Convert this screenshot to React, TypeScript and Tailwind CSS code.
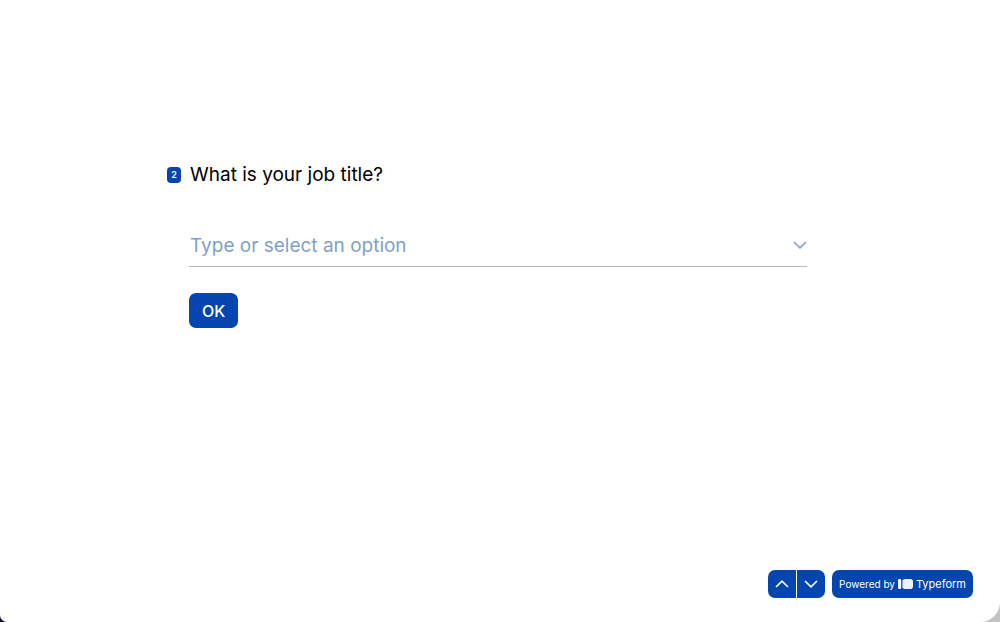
import React, { useState } from "react";

function Chevron({ up = false, className }: { up?: boolean; className: string }) {
  return (
    <svg viewBox="0 0 14 8" fill="none" stroke="currentColor" aria-hidden="true" className={className}>
      <path d={up ? "M1 7 7 1.2 13 7" : "M1 1 7 6.8 13 1"} />
    </svg>
  );
}

function TypeformMark() {
  return (
    <svg viewBox="0 0 15 10" aria-hidden="true" className="h-2.5 w-[15px] fill-white">
      <rect x="0" y="0" width="3.2" height="10" rx="1.3" />
      <rect x="4.4" y="0" width="10.6" height="10" rx="2.8" fillOpacity="0.92" />
    </svg>
  );
}

export default function App() {
  const [title, setTitle] = useState("");

  return (
    <div className="min-h-screen bg-linear-to-r from-[#0c0f1c] to-[#c4c4c4] font-['Inter',sans-serif]">
      <div className="flex min-h-screen flex-col rounded-br-[20px] rounded-bl-[7px] bg-white">
        <main className="grow pt-40">
          <form
            onSubmit={(event) => event.preventDefault()}
            className="grid grid-cols-[22px_minmax(0,618px)_26px] items-center justify-center"
          >
            <span className="flex h-4 w-3.5 items-center justify-center rounded-[4px] bg-[#0445af] text-[9px] font-semibold text-white">
              2
            </span>
            <label htmlFor="job-title" className="pl-px text-[19px] leading-[29px] text-black">
              What is your job title?
            </label>

            <div className="col-start-2 mt-[35px] flex h-[43px] items-center border-b border-[#b1bac8]">
              <input
                id="job-title"
                type="text"
                role="combobox"
                aria-expanded="false"
                aria-controls="job-title"
                autoComplete="off"
                placeholder="Type or select an option"
                value={title}
                onChange={(event) => setTitle(event.target.value)}
                className="min-w-0 grow bg-transparent pl-px text-[19px] leading-[29px] text-[#0445af] outline-none placeholder:text-[#7f9fca]"
              />
              <button type="button" aria-label="Show options" className="text-[#7f9fca]">
                <Chevron className="h-2 w-3.5 stroke-[1.6]" />
              </button>
            </div>

            <button
              type="submit"
              className="col-start-2 mt-[26px] h-[35px] justify-self-start rounded-[7px] bg-[#0445af] px-[13px] text-base font-medium text-white"
            >
              OK
            </button>
          </form>
        </main>

        <footer className="flex justify-end gap-[7px] pr-[27px] pb-6">
          <div className="flex gap-px">
            <button
              type="button"
              aria-label="Previous question"
              className="flex h-7 w-7 items-center justify-center rounded-l-[7px] bg-[#0445af] text-white"
            >
              <Chevron up className="h-2 w-3.5 stroke-[1.6]" />
            </button>
            <button
              type="button"
              aria-label="Next question"
              className="flex h-7 w-7 items-center justify-center rounded-r-[7px] bg-[#0445af] text-white"
            >
              <Chevron className="h-2 w-3.5 stroke-[1.6]" />
            </button>
          </div>
          <a
            href="#typeform"
            className="flex h-7 items-center gap-[3px] rounded-[7px] bg-[#0445af] px-[7px] text-[10px] whitespace-nowrap text-white"
          >
            <span>Powered by</span>
            <TypeformMark />
            <span className="text-[11px]">Typeform</span>
          </a>
        </footer>
      </div>
    </div>
  );
}
